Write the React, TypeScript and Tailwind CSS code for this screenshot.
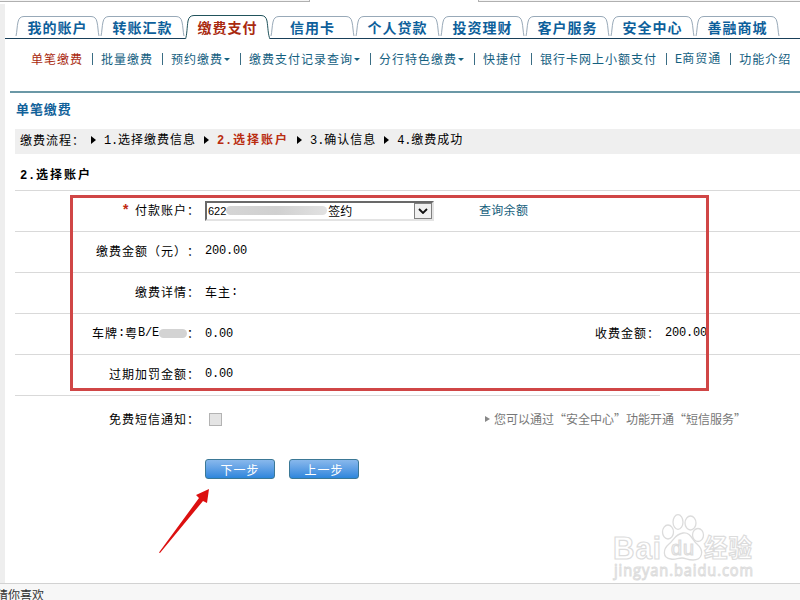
import React from 'react';

interface NavItem {
  label: string;
  latin?: string;
  active?: boolean;
  menu?: boolean;
}

const tabs = ['我的账户', '转账汇款', '缴费支付', '信用卡', '个人贷款', '投资理财', '客户服务', '安全中心', '善融商城'];

const subNav: NavItem[] = [
  { label: '单笔缴费', active: true },
  { label: '批量缴费' },
  { label: '预约缴费', menu: true },
  { label: '缴费支付记录查询', menu: true },
  { label: '分行特色缴费', menu: true },
  { label: '快捷付' },
  { label: '银行卡网上小额支付' },
  { label: '商贸通', latin: 'E' },
  { label: '功能介绍' },
];

const steps = ['选择缴费信息', '选择账户', '确认信息', '缴费成功'];

// half-width characters, 7px each
const Num: React.FC<{ children: React.ReactNode }> = ({ children }) => (
  <span className="font-['Liberation_Mono',monospace] tracking-[-0.2px]">{children}</span>
);

const BoldNum: React.FC<{ children: React.ReactNode }> = ({ children }) => (
  <span className="font-['Liberation_Mono',monospace] tracking-[0.8px]">{children}</span>
);

const Tab: React.FC<{ label: string; active: boolean }> = ({ label, active }) => (
  <div className={`relative w-[85px] shrink-0 ${active ? 'h-[24px] bg-white' : 'h-[23px]'}`}>
    <svg className="absolute left-0 top-0 h-[24px] w-full" viewBox="0 0 85 24" fill="none">
      {active ? (
        <path d="M.5 24C2 20 2 12 3 6Q4 .5 9 .5H76Q81 .5 82 6C83 12 83 20 85 24" stroke="#21535c" />
      ) : (
        <path d="M1 20C2 16 2 10 3 6Q4 .5 9 .5H76Q81 .5 82 6C83 10 83 16 84 20" stroke="#98a9b8" />
      )}
    </svg>
    <span className={`relative block whitespace-nowrap text-center text-[14px] font-bold tracking-[1px] ${active ? 'leading-[24px] text-[#a92a10]' : 'leading-[22px] text-[#0d5f9b]'}`}>
      {label}
    </span>
  </div>
);

const StepArrow: React.FC = () => (
  <svg className="h-[8px] w-[5px] shrink-0" viewBox="0 0 5 8">
    <path d="M0 0L5 4L0 8Z" fill="#000" />
  </svg>
);

const Row: React.FC<{ label: React.ReactNode; children: React.ReactNode }> = ({ label, children }) => (
  <div className="flex h-[41px] items-center border-b border-[#d9d9d9] pb-[2px]">
    <div className="mr-[5px] w-[185px] shrink-0 whitespace-nowrap text-right">{label}</div>
    {children}
  </div>
);

const PayButton: React.FC<{ label: string }> = ({ label }) => (
  <button className="h-[20px] w-[70px] rounded-[3px] border border-[#3b7896] bg-gradient-to-b from-[#88b8ec] to-[#2c86dc] text-center text-[12px] leading-[20px] tracking-[1px] text-white">
    {label}
  </button>
);

const Watermark: React.FC = () => (
  <div className="absolute left-[612px] top-[510px] h-[74px] w-[150px]">
    <svg className="h-full w-full" viewBox="0 0 150 74" fill="#fff" stroke="#dcdcdc" strokeWidth="1.3">
      <ellipse cx="56" cy="22" rx="5.5" ry="7" />
      <ellipse cx="66" cy="12" rx="5" ry="7.3" />
      <ellipse cx="78.5" cy="13" rx="5.5" ry="7" />
      <ellipse cx="86" cy="25" rx="5.5" ry="6.5" />
      <path d="M71 23C79 22 80 30 85 34C93 41 90 50 81 50C75 50 74 48 70 48C66 48 63 50 59 49C50 48 51 39 57 34C62 30 63 24 71 23Z" />
      <g fontFamily="Liberation Sans, sans-serif" strokeWidth="1.2">
        <text x="1" y="49" fontSize="32" fontWeight="bold" textLength="49" lengthAdjust="spacingAndGlyphs">Bai</text>
        <text x="59" y="45" fontSize="20" textLength="24" lengthAdjust="spacingAndGlyphs">du</text>
        <text x="92" y="47" fontSize="25" fontWeight="bold" fontFamily="Noto Sans CJK SC, sans-serif" textLength="49" lengthAdjust="spacingAndGlyphs">经验</text>
        <text x="2" y="66" fontSize="16" fontFamily="Open Sans, sans-serif" textLength="140" lengthAdjust="spacingAndGlyphs" strokeWidth="1">jingyan.baidu.com</text>
      </g>
    </svg>
  </div>
);

const App: React.FC = () => {
  return (
    <div lang="zh-CN" className="relative flex h-[600px] w-[800px] flex-col overflow-hidden bg-white font-['Noto_Sans_CJK_SC',sans-serif] text-[12px] leading-[18px] tracking-[1px] text-black [font-kerning:none] [text-spacing-trim:space-all]">
      {/* Bottom edge of the page header */}
      <div className="flex h-[4px] shrink-0 justify-between">
        <div className="h-[2px] w-[310px] border-b border-r border-[#b0b0b0] bg-[#f5f5f5]" />
        <div className="h-[2px] w-[322px] border-b border-l border-[#b0b0b0] bg-[#f5f5f5]" />
      </div>

      <div className="flex h-[579px] shrink-0">
        <div className="w-[5px] shrink-0 bg-[#eeeeee]" />

        <div className="flex w-[795px] flex-col">
          {/* Main tabs */}
          <nav className="relative flex h-[35px] shrink-0 items-end pl-[10px]">
            <div className="absolute bottom-0 left-0 h-px w-full bg-[#193f59]" />
            {tabs.map((tab, idx) => (
              <Tab key={tab} label={tab} active={idx === 2} />
            ))}
          </nav>

          {/* Sub navigation */}
          <nav className="flex h-[52px] shrink-0 whitespace-nowrap pl-[26px] pt-[11px] text-[#14607f]">
            {subNav.map((item, idx) => (
              <div key={item.label} className="flex h-[18px] items-center">
                {idx > 0 && <i className="ml-[9px] mr-[8px] h-[12px] w-px bg-[#3a6d84]" />}
                <span className={item.active ? 'text-[#a92a10]' : ''}>
                  {item.latin && <Num>{item.latin}</Num>}
                  {item.label}
                </span>
                {item.menu && (
                  <svg className="ml-[1px] mr-[1px] h-[3px] w-[6px]" viewBox="0 0 6 3">
                    <path d="M0 0H6L3 3Z" fill="#14607f" />
                  </svg>
                )}
              </div>
            ))}
          </nav>

          <div className="ml-[5px] h-[2px] shrink-0 bg-[#6b98a6]" />

          <main className="flex flex-col pl-[10px]">
            <h1 className="h-[36px] pl-[1px] pt-[6px] text-[13px] font-bold leading-[20px] tracking-[0.9px] text-[#12629a]">单笔缴费</h1>

            <div className="flex h-[25px] items-center gap-[8px] whitespace-nowrap bg-[#efefef] pb-[3px] pl-[5px]">
              <span className="mr-[-2px]">缴费流程：</span>
              {steps.map((step, idx) => (
                <React.Fragment key={step}>
                  <StepArrow />
                  <span className={idx === 1 ? 'font-bold tracking-[2px] text-[#b92c10]' : ''}>
                    {idx === 1 ? <BoldNum>{idx + 1}.</BoldNum> : <Num>{idx + 1}.</Num>}
                    {step}
                  </span>
                </React.Fragment>
              ))}
            </div>

            <h2 className="h-[37px] border-b border-[#d9d9d9] pl-[5px] pt-[11px] text-[12px] font-bold tracking-[2px]">
              <BoldNum>2.</BoldNum>选择账户
            </h2>

            <Row label={<><span className="mr-[4px] font-['Liberation_Mono',monospace] text-[14px] font-bold text-[#c02a10]">*</span>付款账户：</>}>
              <div className="mt-[2px] flex h-[20px] w-[229px] items-center border-2 border-b-[#e3e3e3] border-l-[#696969] border-r-[#e3e3e3] border-t-[#696969] bg-white pl-[1px] tracking-normal">
                <span className="font-['Liberation_Sans',sans-serif] text-[11px]">622</span>
                <span className="mb-[2px] h-[9px] w-[101px] rounded-full bg-gradient-to-r from-[#d5d5d5] via-[#d0d0d0] to-[#e2e2e2]" />
                <span className="ml-[1px]">签约</span>
                <span className="ml-auto flex h-[16px] w-[18px] items-center justify-center border border-[#808080] bg-[#f0f0f0]">
                  <svg className="h-[6px] w-[10px]" viewBox="0 0 10 6" fill="none">
                    <path d="M1 1L5 5L9 1" stroke="#111" strokeWidth="1.8" />
                  </svg>
                </span>
              </div>
              <a className="ml-[45px] tracking-[0.3px] text-[#15607c]">查询余额</a>
            </Row>
            <Row label="缴费金额（元）："><Num>200.00</Num></Row>
            <Row label="缴费详情：">车主<Num>:</Num></Row>
            <Row
              label={
                <span className="flex items-center justify-end">
                  车牌<Num>:</Num>粤<Num>B/E</Num>
                  <i className="h-[9px] w-[28px] rounded-full bg-[#d3d3d3]" />
                  <span className="w-[13px]">：</span>
                </span>
              }
            >
              <span className="w-[390px]"><Num>0.00</Num></span>
              <span className="mr-[5px]">收费金额：</span>
              <Num>200.00</Num>
            </Row>
            <div className="flex h-[41px] w-[645px] items-center border-b border-[#d9d9d9] pb-[2px]">
              <div className="mr-[5px] w-[185px] shrink-0 text-right">过期加罚金额：</div>
              <Num>0.00</Num>
            </div>

            <div className="flex h-[47px] items-center">
              <div className="mb-[2px] mr-[9px] w-[185px] shrink-0 text-right">免费短信通知：</div>
              <span className="h-[13px] w-[13px] border border-[#b3b3b3] bg-[#e4e4e4]" />
              <div className="mb-[2px] ml-[263px] flex items-center gap-[4px] whitespace-nowrap tracking-normal text-[#777]">
                <svg className="h-[6px] w-[5px]" viewBox="0 0 5 6">
                  <path d="M0 0L5 3L0 6Z" fill="#888" />
                </svg>
                您可以通过“安全中心”功能开通“短信服务”
              </div>
            </div>

            <div className="mt-[16px] flex gap-[14px] pl-[190px]">
              <PayButton label="下一步" />
              <PayButton label="上一步" />
            </div>
          </main>
        </div>
      </div>

      <footer className="h-[17px] shrink-0 overflow-hidden border-t border-[#d2d2d2] bg-[#f7f7f7]">
        <span className="ml-[-4px] mt-[2px] block tracking-normal text-[#333]">猜你喜欢</span>
      </footer>

      {/* Highlight frame and pointer */}
      <div className="absolute left-[70px] top-[195px] h-[196px] w-[639px] border-[3px] border-[#d04646]" />
      <svg className="absolute left-[156px] top-[486px] h-[70px] w-[56px]" viewBox="0 0 56 70">
        <path d="M3 66.5L43 12L40 9L53 3L51 17L47 15L4 67Z" fill="#dc1010" />
      </svg>

      <Watermark />
    </div>
  );
};

export default App;
